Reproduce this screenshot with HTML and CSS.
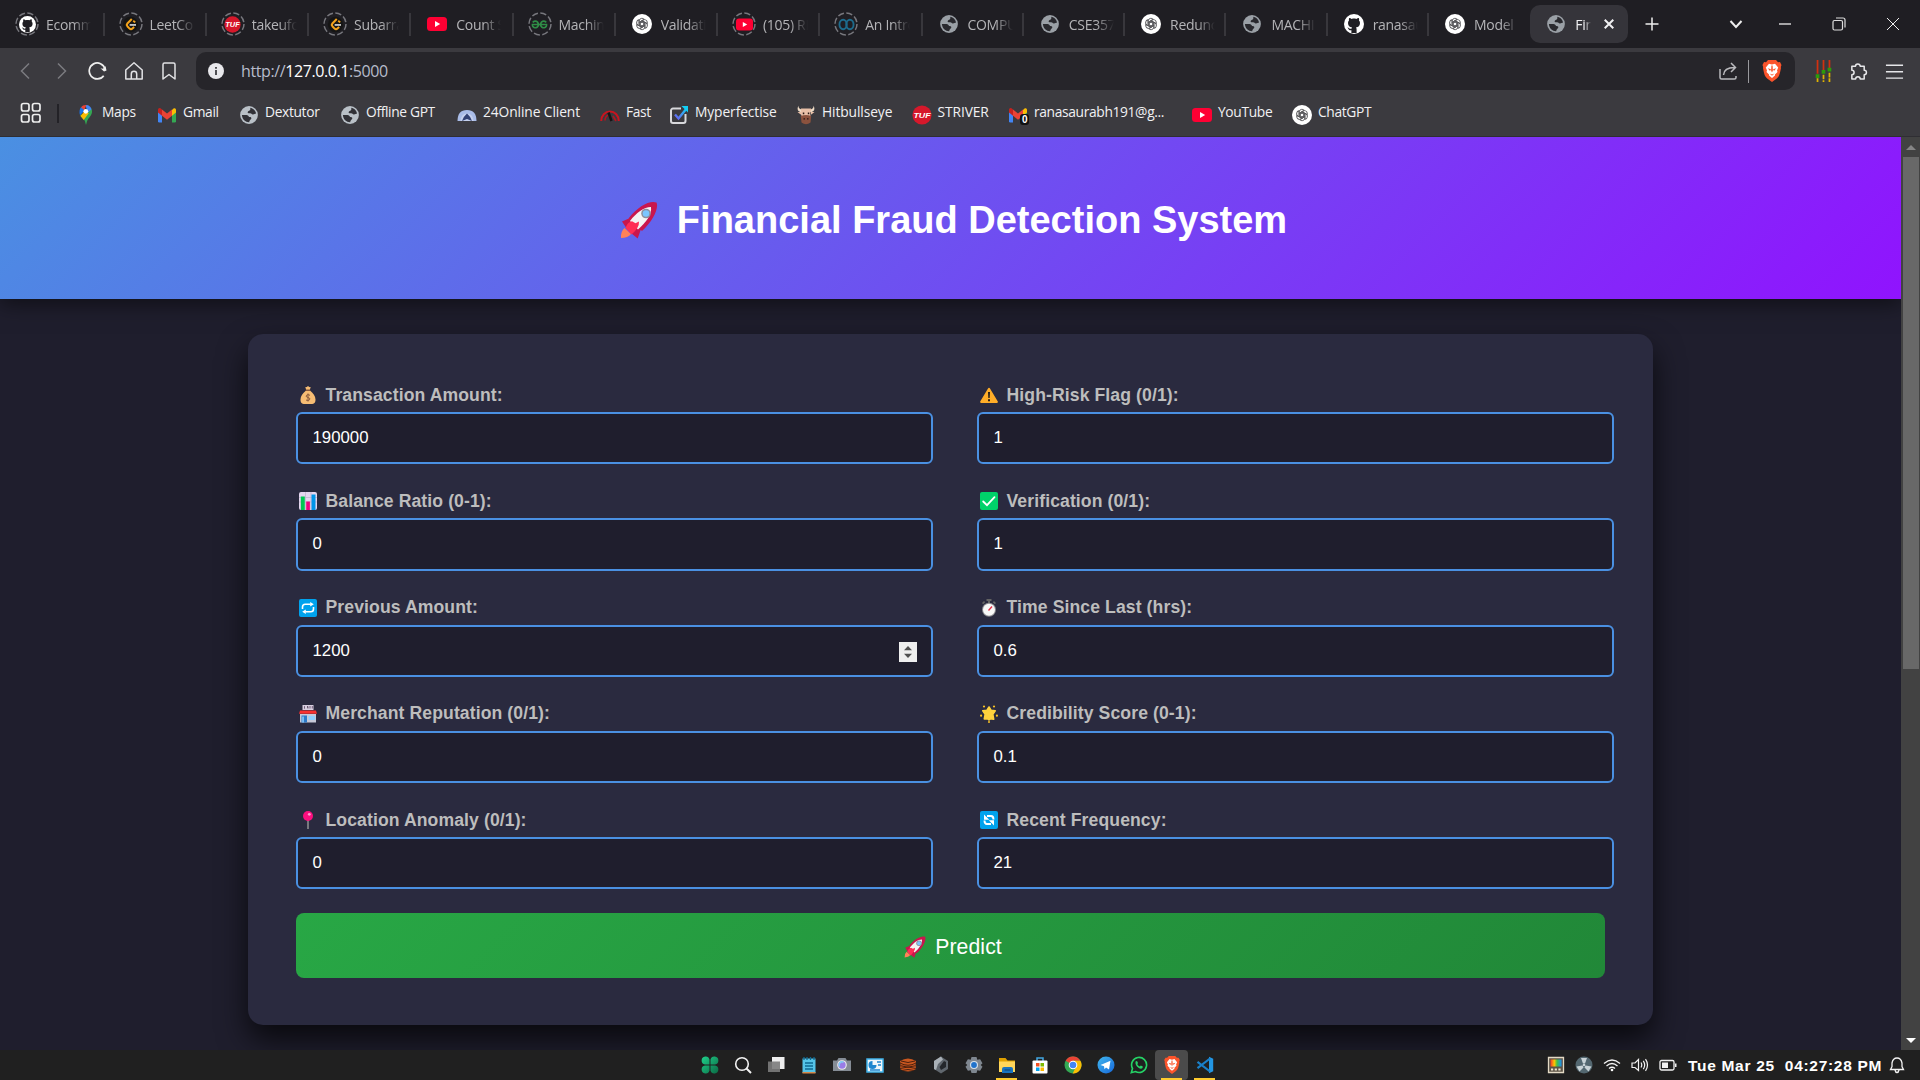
FILE: index.html
```html
<!DOCTYPE html>
<html lang="en">
<head>
<meta charset="utf-8">
<title>Financial Fraud Detection System</title>
<link rel="stylesheet" href="styles.css">
</head>
<body>
<svg class="defs" aria-hidden="true">
  <defs>
    <linearGradient id="g-clover" x1="0" y1="0" x2="1" y2="1"><stop offset="0" stop-color="#1fd08a"/><stop offset="1" stop-color="#0b6b45"/></linearGradient>
    <linearGradient id="g-tg" x1="0" y1="0" x2="1" y2="1"><stop offset="0" stop-color="#41b8ef"/><stop offset="1" stop-color="#1667d9"/></linearGradient>
    <linearGradient id="g-rain" x1="0" x2="1"><stop offset="0" stop-color="#f13a2b"/><stop offset=".35" stop-color="#ffc400"/><stop offset=".6" stop-color="#3fbf4a"/><stop offset="1" stop-color="#1e8df2"/></linearGradient>
    <linearGradient id="g-chk" x1="0" y1="1" x2="1" y2="0"><stop offset="0" stop-color="#6a5cf0"/><stop offset="1" stop-color="#12d5f5"/></linearGradient>
  </defs>
  <symbol id="ring" viewBox="0 0 24 24"><circle cx="12" cy="12" r="11" fill="none" stroke="#77777d" stroke-width="1.5" stroke-dasharray="6.2 2.44"/></symbol>
  <symbol id="github" viewBox="0 0 20 20"><circle cx="10" cy="10" r="10" fill="#fff"/><path fill="#1f1e23" d="M7.4 19v-2.800c-2 .4-2.7-.6-3.1-1.5-.2-.5-.6-.9-1-1.200 1.500-.4 1.900 1.800 4.200 1.300.1-.6.3-1 .6-1.300C5.600 13.100 4 12 4 9.100c0-1 .4-1.900 1-2.500-.2-.8-.2-1.700.1-2.700 1 0 1.900.5 2.600 1 1.500-.4 3.100-.4 4.600 0 .7-.5 1.600-1 2.600-1 .3 1 .3 1.900.1 2.700.6.6 1 1.500 1 2.500 0 2.900-1.600 4-4.100 4.400.5.5.7 1.100.7 1.900v3.600z"/></symbol>
  <symbol id="leet" viewBox="0 0 20 20"><circle cx="10" cy="10" r="9" fill="#151515"/><path d="M11.500 3.500 6.300 8.800q-1.400 1.600 0 3.200l2.600 2.800q1.700 1.500 3.400 0l2-1.800" fill="none" stroke="#f5a31b" stroke-width="2.400"/><path d="M9 10.500h7.500" stroke="#c4c4c4" stroke-width="2.200"/><path d="m13.200 5.500 2.300 2" stroke="#f5a31b" stroke-width="2.200"/></symbol>
  <symbol id="tuf" viewBox="0 0 20 20"><circle cx="10" cy="10" r="9.600" fill="#d6182b"/><text x="10" y="13" text-anchor="middle" class="tuf-text" textLength="17" lengthAdjust="spacingAndGlyphs">TUF</text></symbol>
  <symbol id="yt" viewBox="0 0 20 20"><rect y="3" width="20" height="14" rx="3.500" fill="#ff0033"/><path d="M8 7v6l5.200-3z" fill="#fff"/></symbol>
  <symbol id="gfg" viewBox="0 0 20 20" fill="none" stroke="#2f8d46" stroke-width="1.900"><path d="M2 7.500Q5 4.800 7.800 7.300q2.200 3-.3 5.700-3.500 2.200-5.500-1-.5-1-.3-2H18.300q.2 1-.3 2-2 3.200-5.500 1-2.500-2.700-.3-5.700Q15 4.800 18 7.500"/></symbol>
  <symbol id="loops" viewBox="0 0 20 20" fill="none" stroke="#1d6b8c" stroke-width="2.200"><ellipse cx="6" cy="10" rx="4.300" ry="5.600"/><ellipse cx="14" cy="10" rx="4.300" ry="5.600"/></symbol>
  <symbol id="gpt" viewBox="0 0 20 20"><circle cx="10" cy="10" r="10" fill="#fff"/><g fill="none" stroke="#555558" stroke-width=".9"><path id="petal" d="M7.200 12V6.800q.2-2.300 2.600-2.500 1.500 0 2.400 1L8.300 7.600v4.200"/><use href="#petal" transform="rotate(60 10 10)"/><use href="#petal" transform="rotate(120 10 10)"/><use href="#petal" transform="rotate(180 10 10)"/><use href="#petal" transform="rotate(240 10 10)"/><use href="#petal" transform="rotate(300 10 10)"/></g></symbol>
  <symbol id="globe" viewBox="0 0 20 20"><circle cx="10" cy="10" r="8.900" fill="#9aa0a6"/><path fill="#29292e" d="M11.300 2.800c2 .3 5 2 5.800 5.600l-3.100 1c-1.300.2-1.600-1.400-3-1.200-1.500.3-2.600 0-2.300-1.300.3-1.400 2.700-1 2.600-2.500zM2.900 10h4.600c1.400.1 2.200 1 2.500 2 2.300-.2 2.700.9 2.100 2-.6 1-1.700 1-1.900 3.200-3.700.1-7-2.600-7.300-7.200z"/></symbol>
  <symbol id="maps" viewBox="0 0 20 24"><path fill="#34a853" d="M3.500 12.500 15.800 5c3 6-3 10-4.600 13.500L10 23l-1.200-4.500C8 16.500 5 15 3.500 12.500z"/><path fill="#fbbc04" d="m4 13 5-6 4 3-5.500 7.500z"/><path fill="#4285f4" d="M9.500 1.200c3-.5 5.700 1.500 6.500 4.500l-4.200 4z"/><path fill="#ea4335" d="M4.500 3.500q2-2.500 6-2.300L7 9z"/><path fill="#1a73e8" d="M3.500 12.300C2.300 9 3 5.500 4.500 3.500L8.500 7z"/><circle cx="9.800" cy="8" r="2.600" fill="#fff"/></symbol>
  <symbol id="gmail" viewBox="0 0 20 20"><path fill="#4285f4" d="M1 5h4v12.500H2.300A1.300 1.300 0 0 1 1 16.200z"/><path fill="#34a853" d="M15 5h4v11.200a1.300 1.300 0 0 1-1.300 1.300H15z"/><path fill="#fbbc04" d="m15 5 1.500-1.500C18 2.600 19 3.500 19 5v2.500l-4 3.200z"/><path fill="#c5221f" d="M1 5c0-1.700 1.500-2.400 2.700-1.500L5 4.500v6.200L1 7.500z"/><path fill="#ea4335" d="m5 4.500 5 4 5-4v6.200l-5 4-5-4z"/></symbol>
  <symbol id="arch" viewBox="0 0 20 20"><path d="M.5 16q0-11 9.500-11t9.500 11z" fill="#a9bce8"/><path d="M3.500 16q.5-7.500 6.500-7.500t6.500 7.500z" fill="#c4d0ee"/><path d="M5 16q1-4 5-7.500 4 3.500 5 7.500l-5-2z" fill="#334275"/></symbol>
  <symbol id="gauge" viewBox="0 0 20 20" fill="none"><path d="M1.200 16a8.800 9.500 0 0 1 17.600 0" stroke="#c8141f" stroke-width="2"/><path d="M5 15.500a5.500 5.500 0 0 1 5-6M13 11l3 5" stroke="#b3141f" stroke-width="1.600"/><path d="m8.500 7.500 3 8.500" stroke="#151515" stroke-width="2.500"/></symbol>
  <symbol id="checkbox" viewBox="0 0 20 20" fill="none"><path d="M12 3.500H4A2 2 0 0 0 2 5.500V16a2 2 0 0 0 2 2h10.500a2 2 0 0 0 2-2V9" stroke="#d8d8dc" stroke-width="2"/><path d="m6 9.500 3.500 4L18 3" stroke="url(#g-chk)" stroke-width="2.400"/><path d="M12.500 1H19v6.500z" fill="#12cdf3"/></symbol>
  <symbol id="bull" viewBox="0 0 20 20"><path fill="#efdcc6" d="M2.500.5q-.5 3.500 4 4v3q-7-1-4-7zm15 0q.5 3.500-4 4v3q7-1 4-7z"/><path fill="#e9c0a8" d="M5 3.500h10l-.5 9h-9zM1.500 7 6 7v3.500zM18.500 7 14 7v3.500z"/><path fill="#8b523e" d="M4.800 11q5.200-2 10.400 0l-.7 6.500q-4.500 3.500-9 0z"/><path fill="#2a1814" d="M6.800 7.500h1.500v1.800H6.800zm5 0h1.500v1.800h-1.500zM7.500 13.200h1.500v1.200H7.500zm3.500 0h1.500v1.200H11z"/></symbol>
  <symbol id="back" viewBox="0 0 20 20"><path d="M13 2.500 5.500 10l7.500 7.500" fill="none" stroke="#7b7b80" stroke-width="1.500"/></symbol>
  <symbol id="fwd" viewBox="0 0 20 20"><path d="m6 2.500 7.500 7.500L6 17.500" fill="none" stroke="#7b7b80" stroke-width="1.500"/></symbol>
  <symbol id="reload" viewBox="0 0 20 20"><path d="M15.700 14.700A8 8 0 1 1 17 8" fill="none" stroke="#eee" stroke-width="1.700"/><path d="M12.500 7.200q3.500 1.500 5-2.200l1 4.500-2.500 1z" fill="#eee"/></symbol>
  <symbol id="home" viewBox="0 0 20 20" fill="none" stroke="#e2e2e5" stroke-width="1.500"><path d="M1.800 9 10 1.800 18.200 9v9H1.800z" stroke-linejoin="round"/><path d="M7.300 18v-5a2.700 2.700 0 0 1 5.400 0v5"/></symbol>
  <symbol id="mark" viewBox="0 0 20 20"><path d="M3 3.500Q3 2 4.500 2h9Q15 2 15 3.500V18l-6-4.500L3 18z" fill="none" stroke="#e2e2e5" stroke-width="1.500" stroke-linejoin="round"/></symbol>
  <symbol id="info" viewBox="0 0 16 16"><circle cx="8" cy="8" r="8" fill="#e8e8ec"/><path d="M7.200 7h1.600v5H7.200zM7.200 4h1.600v1.700H7.200z" fill="#29292e"/></symbol>
  <symbol id="share" viewBox="0 0 20 20" fill="none" stroke="#b9b9bd" stroke-width="1.500"><path d="M2 8v8.500A1.500 1.500 0 0 0 3.500 18h13a1.500 1.500 0 0 0 1.500-1.500V15"/><path d="M5.500 14Q6 6.500 16.500 6.500M13 2l4.500 4.500L13 11"/></symbol>
  <symbol id="brave" viewBox="0 0 20 22"><path fill="#fb542b" d="M6 0h8l2 2.200 2-.2 1.500 3-.7 2 .2 1c-1 5-1.500 8.500-4.500 10.700L10 22l-4.500-3.300C2.500 16.500 2 13 1 8l.2-1-.7-2L2 2l2 .2z"/><path fill="#fff" d="m10 4.500 3-.7 3.200 3.700-1.200 3 .5 1.500-2.500 2.500 0 1-3 2.500-3-2.500v-1L4.500 12l.5-1.500-1.200-3L7 3.800z"/><path fill="#fb542b" d="M5.800 8.300 9 9.200 8 11zm8.400 0L11 9.200l1 1.800zM7.500 13.500l2.500 1 2.500-1L10 15.800zM9.400 5.500h1.200l.3 5-.9 2-.9-2z"/></symbol>
  <symbol id="eq" viewBox="0 0 18 24"><path d="M2.500 0v15M9 0v11M15.500 0v9" stroke="#d3300f" stroke-width="1.900"/><path d="M2.500 20v4M9 16v8M15.500 14v10" stroke="#e0b400" stroke-width="1.900" stroke-dasharray="5 1"/><path d="M.5 15.500h4v4h-4zM7 11h4v4H7zM13.500 8.500h4v4h-4z" fill="#2d9b0b"/></symbol>
  <symbol id="puzzle" viewBox="0 0 20 20"><path d="M3 4.500h3.800a2.500 2.500 0 0 1 5 0h4.200v4.300a2.300 2.300 0 0 1 0 4.700v4.500h-4.200a2.400 2.400 0 0 0-4.800 0H3v-4.500a2.300 2.300 0 0 0 0-4.700z" fill="none" stroke="#e6e6e9" stroke-width="1.600" stroke-linejoin="round"/></symbol>
  <symbol id="menu" viewBox="0 0 20 20"><path d="M1 3.500h18M1 10.300h18M1 17h18" stroke="#e6e6e9" stroke-width="1.500"/></symbol>
  <symbol id="apps" viewBox="0 0 22 22" fill="none" stroke="#eee" stroke-width="1.700"><rect x="1.500" y="1.500" width="7.500" height="7.500" rx="2"/><rect x="12.500" y="1.500" width="7.500" height="7.500" rx="2"/><rect x="1.500" y="12.500" width="7.500" height="7.500" rx="2"/><rect x="12.500" y="12.500" width="7.500" height="7.500" rx="2"/></symbol>
  <symbol id="x" viewBox="0 0 14 14"><path d="m1 1 12 12M13 1 1 13" stroke="currentColor" fill="none"/></symbol>
  <symbol id="rocket" viewBox="0 0 38 38"><path fill="#ff8257" d="M1 37q-.5-6.500 3.500-10l6.500 6Q8 37 1 37z"/><path fill="#c9164d" d="M2 20.500 10 17l11 11-3.300 9.500-8-6.500-3-3.500zM36.500 1.500C39 7 33 20 22 30L8.500 17.500C18 5 30-1 36.500 1.500z"/><path fill="#f4f4f4" d="M31 6C24 6 16 12 10 20l8 8.500C26 21.500 32 13.500 31 6z"/><path fill="#ff2d55" d="M5.500 27q2-6 6.500-6.800l3.500 2 3.500-1.700q.5 6-7.500 13z"/><circle cx="26" cy="12.500" r="4.800" fill="#8d8f9c"/><circle cx="26" cy="12.500" r="3.300" fill="#7bc6ff"/></symbol>
  <symbol id="bag" viewBox="0 0 18 18"><path fill="#8a5a3c" d="M7 3h4l.7 2.500H6.300z"/><path fill="#f6bc73" d="M6.200 1.300 7.800 1 9 0l1.200 1 1.600.3L10.800 3.500H7.200zM6.500 5h5c2.500 2 5 5 5 8.500S15 18 12.500 18h-7c-2.500 0-4-1-4-4.500S4 7 6.500 5z"/><path d="M11 9.300Q9 8 7.500 9.300t1.500 2.200 1.500 2.300T7 14M9 7.500v8" fill="none" stroke="#8a5a3c"/></symbol>
  <symbol id="chart" viewBox="0 0 18 18"><rect width="18" height="18" rx="2" fill="#e4d6ef"/><path d="M0 5.500h18M0 10h18M6.500 0v18M12 0v18" stroke="#bfb0cd" stroke-width=".7"/><path fill="#00c853" d="M1.800 4.500h4V18h-4z"/><path fill="#f0047f" d="M7.200 9.500h3.700V18H7.200z"/><path fill="#0095e8" d="M12.500 2.500h4V18h-4z"/></symbol>
  <symbol id="repeat" viewBox="0 0 18 18"><rect width="18" height="18" rx="2" fill="#00a2ed"/><g fill="none" stroke="#fff" stroke-width="1.600"><path d="M3.500 10V8q0-2.700 2.700-2.700h5.500M14.500 8v2q0 2.700-2.700 2.700H6.300"/></g><path fill="#fff" d="m11.200 3 3.600 2.300-3.600 2.300zM6.800 10.400V15l-3.600-2.300z"/></symbol>
  <symbol id="shop" viewBox="0 0 18 18"><path fill="#d8cfe0" d="M3.500 0h11v5h-11z"/><path d="M5.500 1.200v2.500M8 1.500h1v2M11 1v2.500M13.300 1v2.500" stroke="#66506e" stroke-width=".9"/><path fill="#c6c9d8" d="M1 9h16v8.500H1z"/><path fill="#f8312f" d="M1 5.500h16l1 3.200H0z"/><path fill="#2c79c7" d="M2.500 10.500H8v7H2.500z"/><path fill="#8fd0ff" d="M9.500 11h6.500v4H9.500zM3.300 11.500h1.500v6H3.300z"/></symbol>
  <symbol id="pin" viewBox="0 0 18 18"><path d="M9 8v10" stroke="#9b9b9b" stroke-width="1.400"/><circle cx="9" cy="5" r="5" fill="#fa0f7f"/><circle cx="10.300" cy="3.300" r="1.400" fill="#ff9ccf"/></symbol>
  <symbol id="warn" viewBox="0 0 18 18"><path fill="#ffad28" d="M9 1.800q.6 0 1 .7l7.800 13q.5 1.200-.8 1.500H1Q-.2 16.700.2 15.500L8 2.500q.4-.7 1-.7z"/><path fill="#2b2118" d="M8 6h2l-.3 6H8.300zM8 13.200h2v2H8z"/></symbol>
  <symbol id="ok" viewBox="0 0 18 18"><rect width="18" height="18" rx="2" fill="#00d26a"/><path d="m3.200 9.500 3.800 3.700 7.500-8" fill="none" stroke="#fff" stroke-width="1.800" stroke-linecap="round"/></symbol>
  <symbol id="watch" viewBox="0 0 18 18"><path fill="#636363" d="M6.500 0h5v2H10v2H8V2H6.500zM2 4l2-2 1.200 1.200-2 2zM16 4l-2-2-1.200 1.200 2 2z"/><circle cx="9" cy="10.700" r="7" fill="#8d8d92"/><circle cx="9" cy="10.700" r="6" fill="#f8f8f8"/><path d="m8.500 11.500 3.500-4" stroke="#e62d45" stroke-width="1.300"/></symbol>
  <symbol id="glow" viewBox="0 0 18 18"><path fill="#ffd23d" stroke="#ffd23d" stroke-width="1.600" stroke-linejoin="round" d="m9 2 2 3.200 4.200.5-2.400 3.700.9 4.800-3.400-.4L9 15l-1.300-1.400-3.400.4.900-4.800-2.400-3.500L7 5.200z"/><g fill="#f9c024"><circle cx="4" cy="1.500" r="1.100"/><circle cx="14" cy="1.500" r="1.100"/><circle cx="1.100" cy="10.700" r="1.100"/><circle cx="16.900" cy="10.700" r="1.100"/><circle cx="9" cy="17" r="1"/></g></symbol>
  <symbol id="cycle" viewBox="0 0 18 18"><rect width="18" height="18" rx="2" fill="#00a2ed"/><g fill="none" stroke="#fff" stroke-width="1.900"><path d="M7 5h4q2.500 0 2.500 3.500"/><path d="M11 13H7q-2.500 0-2.500-3.500"/></g><path fill="#fff" d="M4 3.500v5.300h5.200zM14 14.500V9.200H8.800z"/></symbol>
  <symbol id="t-clover" viewBox="0 0 18 18"><g fill="url(#g-clover)"><path d="M8.500 8.500H4A4 4 0 1 1 8.500 3.500zM9.500 8.500V3.500A4 4 0 1 1 14 8.500zM8.500 9.500v5A4 4 0 1 1 4 9.500zM9.500 9.500H14a4 4 0 1 1-4.500 5z"/></g></symbol>
  <symbol id="t-search" viewBox="0 0 18 18" fill="none" stroke="#f2f2f2" stroke-width="1.600"><circle cx="8" cy="8" r="6.300"/><path d="m12.500 12.500 4.500 4.500" stroke-width="2"/></symbol>
  <symbol id="t-view" viewBox="0 0 18 18"><path fill="#eee" d="M5 1h12.500v12H5z"/><path fill="#7b7b7b" opacity=".9" d="M1 5.500h12V16H1z"/></symbol>
  <symbol id="t-note" viewBox="0 0 18 18"><path fill="#55c4e8" d="M2.500 2.500h13V17h-13z"/><path fill="#d58a4c" d="M2.500 16h13v1.500h-13z"/><path d="M4 1v3M7 1v3M10.500 1v3M14 1v3M5 7h8M5 10h8M5 13h8" stroke="#0e6a92" stroke-width="1.300"/></symbol>
  <symbol id="t-cam" viewBox="0 0 18 18"><path fill="#858c95" d="M0 4.500h4L5.500 2h7L14 4.500h4V15H0z"/><circle cx="9" cy="9" r="4.800" fill="#eee"/><circle cx="9" cy="9" r="3.700" fill="#9a7ce6"/><path d="M6.500 10.500a3 3 0 0 1 4-4.200" fill="none" stroke="#7fd0f5" stroke-width="1.500"/></symbol>
  <symbol id="t-panel" viewBox="0 0 18 18"><path fill="#f0f6fa" stroke="#3eb2ea" stroke-width="1.500" d="M1 3h16v13H1z"/><path fill="#1f86cf" d="M6.500 5v4h4a4 4 0 1 1-4-4z"/><path d="M11 6h4M12 9h3M4 14h10" stroke="#1f86cf" stroke-width="1.300"/></symbol>
  <symbol id="t-burn" viewBox="0 0 18 18"><path fill="#c9571f" d="M1 5q8-5 16 0-1 4 0 8-8 5-16 0 1-4 0-8z"/><path d="M1 7q8 4.500 16 0M1.500 9.700q7.500 3 15 0M1 12.500q8-3 16 0M2 5q7 3 14 0M3 14.500q6-2 12 0" stroke="#4a200f" stroke-width="1" fill="none"/></symbol>
  <symbol id="t-hex" viewBox="0 0 18 18"><path fill="#60676e" d="m9 .5 7 4.500v8l-7 4.500L2 13V5z"/><path fill="#a9b0b6" d="m9 .5 2 3L6 8l-2 6-2-1V5z"/><path fill="#24272b" d="m12 5 2 1v5l-5 3-1.500-3z"/></symbol>
  <symbol id="t-gear" viewBox="0 0 18 18"><path fill="#7f8790" d="M6.500 1h5l.8 2.700 2.800-.5 2.400 4L15.700 9l1.800 1.800-2.400 4-2.800-.5-.8 2.700h-5l-.8-2.700-2.800.5-2.400-4L2.300 9 .5 7.200l2.400-4 2.800.5z"/><circle cx="9" cy="9" r="4" fill="#d8e2eb"/><circle cx="9" cy="9" r="2.900" fill="#2173cc"/></symbol>
  <symbol id="t-folder" viewBox="0 0 18 18"><path fill="#e0a100" d="M1 2h6.500l2 2.500H17V9H1z"/><path fill="#ffd65a" d="M1 5.500h16V16H1z"/><path fill="#1973bf" d="M4 17v-4q0-2 2-2h7q2 0 2 2v4z"/><path d="M6.500 14h6" stroke="#0d4c86" stroke-width="1.300"/></symbol>
  <symbol id="t-store" viewBox="0 0 18 18"><path d="M6 5V2h6v3" fill="none" stroke="#42a7e1" stroke-width="1.500"/><rect x="1.500" y="4.500" width="15" height="13" rx="1" fill="#fff"/><path fill="#f25022" d="M5 7h3.500v3.500H5z"/><path fill="#7fba00" d="M9.500 7H13v3.500H9.500z"/><path fill="#00a4ef" d="M5 11.500h3.500V15H5z"/><path fill="#ffb900" d="M9.500 11.500H13V15H9.500z"/></symbol>
  <symbol id="t-chrome" viewBox="0 0 18 18"><circle cx="9" cy="9" r="8.500" fill="#34a853"/><path fill="#ea4335" d="M9 9 1.600 4.800A8.500 8.500 0 0 1 16.400 4.800H9z"/><path fill="#fbbc04" d="M9 9h3.700l-4 8.500a8.500 8.500 0 0 0 7.700-12.700H9z"/><circle cx="9" cy="9" r="4.300" fill="#fff"/><circle cx="9" cy="9" r="3.300" fill="#4285f4"/></symbol>
  <symbol id="t-tg" viewBox="0 0 18 18"><circle cx="9" cy="9" r="8.500" fill="url(#g-tg)"/><path fill="#fff" d="m3.500 9 10-4.200L12 13.500l-3-2-1.500 1.800-.5-3z"/></symbol>
  <symbol id="t-wa" viewBox="0 0 18 18"><path fill="none" stroke="#25d366" stroke-width="1.600" d="m1.300 16.700 1.200-4.200a7.500 7.500 0 1 1 3 3z"/><path fill="#25d366" d="M5.500 5.500 7 5l1 2-.7 1.200q1 1.700 2.500 2.400l1-1 2 1-.3 1.500q-1.500 1.300-4-.3-3.500-2.300-3-6.300z"/></symbol>
  <symbol id="t-code" viewBox="0 0 18 18"><path fill="#2397e4" d="m13 .8 4.200 1.900v12.600L13 17.200z"/><path fill="none" stroke="#1a80c9" stroke-width="2.200" d="M14 2.500 1.500 12.200M14 15.500 1.500 5.800"/></symbol>
  <symbol id="y-rain" viewBox="0 0 18 18"><path fill="#5b5245" stroke="#e4dac5" stroke-width="1.300" d="M1.500 1.500h15v15h-15z"/><path fill="url(#g-rain)" d="M3.500 3.500h11v7h-11z"/><path d="M4 13.500h10" stroke="#eee4cf" stroke-width="2" stroke-dasharray="2.200 1.500"/></symbol>
  <symbol id="y-fan" viewBox="0 0 18 18"><circle cx="9" cy="9" r="8.500" fill="#536770"/><g fill="#c8d2d6"><path d="M6 2h6L10 7.500H8z"/><path d="m16.500 10.500-3 5-4-4 1-2z"/><path d="m1.500 10.500 3 5 4-4-1-2z"/><circle cx="9" cy="9" r="1.300"/></g></symbol>
  <symbol id="y-wifi" viewBox="0 0 18 18" fill="none" stroke="#f2f2f2" stroke-width="1.300"><path d="M1 7.500q8-7 16 0M3.500 10q5.500-5 11 0M6 12.500q3-2.500 6 0"/><circle cx="9" cy="14" r="1.300" fill="#fff" stroke="none"/></symbol>
  <symbol id="y-vol" viewBox="0 0 18 18" fill="none" stroke="#f2f2f2" stroke-width="1.200"><path d="M1 7h3l3.500-3.500v11L4 11.500H1zM10 6.500q1.500 2.500 0 5M12.300 4.800q2.800 4.200 0 8.400M14.500 3.200q4 5.800 0 11.600"/></symbol>
  <symbol id="y-bat" viewBox="0 0 18 18"><rect x="1" y="4.500" width="14" height="9.500" rx="1.500" fill="none" stroke="#f2f2f2" stroke-width="1.300"/><path fill="#f2f2f2" d="M3 6.500h6V12H3zM16 7.500h1.500v3.500H16z"/></symbol>
  <symbol id="y-bell" viewBox="0 0 18 18" fill="none" stroke="#f2f2f2" stroke-width="1.300"><path d="M2.500 13.500h13l-1.500-3V7Q13 2 9 2T4 7v3.500zM7 14q.5 2.500 2 2.500t2-2.500"/></symbol>
</svg>

<div class="screen">
  <div class="tabs">
    <div class="tab"><span class="fav ringed"><svg class="ring"><use href="#ring"/></svg><svg><use href="#github"/></svg></span><span class="tab-title">Ecomm</span></div>
    <div class="tab"><span class="fav ringed"><svg class="ring"><use href="#ring"/></svg><svg><use href="#leet"/></svg></span><span class="tab-title">LeetCo</span></div>
    <div class="tab"><span class="fav ringed"><svg class="ring"><use href="#ring"/></svg><svg><use href="#tuf"/></svg></span><span class="tab-title">takeufo</span></div>
    <div class="tab"><span class="fav ringed"><svg class="ring"><use href="#ring"/></svg><svg><use href="#leet"/></svg></span><span class="tab-title">Subarra</span></div>
    <div class="tab"><span class="fav"><svg><use href="#yt"/></svg></span><span class="tab-title">Count S</span></div>
    <div class="tab"><span class="fav ringed"><svg class="ring"><use href="#ring"/></svg><svg><use href="#gfg"/></svg></span><span class="tab-title">Machin</span></div>
    <div class="tab"><span class="fav"><svg><use href="#gpt"/></svg></span><span class="tab-title">Validati</span></div>
    <div class="tab"><span class="fav ringed"><svg class="ring"><use href="#ring"/></svg><svg><use href="#yt"/></svg></span><span class="tab-title">(105) RE</span></div>
    <div class="tab"><span class="fav ringed"><svg class="ring"><use href="#ring"/></svg><svg><use href="#loops"/></svg></span><span class="tab-title">An Intro</span></div>
    <div class="tab"><span class="fav"><svg><use href="#globe"/></svg></span><span class="tab-title">COMPU</span></div>
    <div class="tab"><span class="fav"><svg><use href="#globe"/></svg></span><span class="tab-title">CSE357</span></div>
    <div class="tab"><span class="fav"><svg><use href="#gpt"/></svg></span><span class="tab-title">Redunc</span></div>
    <div class="tab"><span class="fav"><svg><use href="#globe"/></svg></span><span class="tab-title">MACHI</span></div>
    <div class="tab"><span class="fav"><svg><use href="#github"/></svg></span><span class="tab-title">ranasau</span></div>
    <div class="tab"><span class="fav"><svg><use href="#gpt"/></svg></span><span class="tab-title">Model</span></div>
    <div class="tab active"><span class="fav"><svg><use href="#globe"/></svg></span><span class="tab-title">Fin</span><svg class="close"><use href="#x"/></svg></div>
    <svg class="new-tab" viewBox="0 0 14 14"><path d="M7 .5v13M.5 7h13" stroke="#eee" stroke-width="1.500"/></svg>
    <div class="win-controls">
      <svg viewBox="0 0 14 14"><path d="m1.500 4 5.500 6 5.500-6" fill="none" stroke="#eee" stroke-width="2"/></svg>
      <svg viewBox="0 0 14 14"><path d="M1 7h12" stroke="#eee" stroke-width="1.300"/></svg>
      <svg viewBox="0 0 14 14" fill="none" stroke="#ddd" stroke-width="1.200"><rect x="1" y="3.500" width="9.500" height="9.500" rx="1.500"/><path d="M4 1h7q2 0 2 2v7.500"/></svg>
      <svg><use href="#x"/></svg>
    </div>
  </div>

  <div class="toolbar">
    <div class="nav"><svg><use href="#back"/></svg><svg><use href="#fwd"/></svg><svg><use href="#reload"/></svg><svg><use href="#home"/></svg><svg><use href="#mark"/></svg></div>
    <div class="address">
      <svg class="info"><use href="#info"/></svg>
      <span class="url">http://<b>127.0.0.1</b>:5000</span>
      <svg class="share"><use href="#share"/></svg><span class="divider"></span><svg class="shield"><use href="#brave"/></svg>
    </div>
    <div class="tools"><svg class="eq"><use href="#eq"/></svg><svg><use href="#puzzle"/></svg><svg><use href="#menu"/></svg></div>
  </div>

  <div class="bookmarks">
    <svg class="apps"><use href="#apps"/></svg>
    <span class="bm-sep"></span>
    <div class="bm"><svg class="tall"><use href="#maps"/></svg>Maps</div>
    <div class="bm"><svg><use href="#gmail"/></svg>Gmail</div>
    <div class="bm bright"><svg><use href="#globe"/></svg>Dextutor</div>
    <div class="bm bright"><svg><use href="#globe"/></svg>Offline GPT</div>
    <div class="bm wide"><svg><use href="#arch"/></svg>24Online Client</div>
    <div class="bm"><svg><use href="#gauge"/></svg>Fast</div>
    <div class="bm wide"><svg><use href="#checkbox"/></svg>Myperfectise</div>
    <div class="bm wide"><svg><use href="#bull"/></svg>Hitbullseye</div>
    <div class="bm wide"><svg><use href="#tuf"/></svg>STRIVER</div>
    <div class="bm mail"><svg><use href="#gmail"/></svg><span class="count">0</span>ranasaurabh191@g...</div>
    <div class="bm"><svg><use href="#yt"/></svg>YouTube</div>
    <div class="bm"><svg><use href="#gpt"/></svg>ChatGPT</div>
  </div>

  <div class="viewport">
    <main class="page">
      <header class="hero"><svg><use href="#rocket"/></svg><h1>Financial Fraud Detection System</h1></header>
      <section class="card">
        <div class="fields">
          <div class="field"><label><svg><use href="#bag"/></svg>Transaction Amount:</label><div class="input">190000</div></div>
          <div class="field"><label><svg><use href="#warn"/></svg>High-Risk Flag (0/1):</label><div class="input">1</div></div>
          <div class="field"><label><svg><use href="#chart"/></svg>Balance Ratio (0-1):</label><div class="input">0</div></div>
          <div class="field"><label><svg><use href="#ok"/></svg>Verification (0/1):</label><div class="input">1</div></div>
          <div class="field"><label><svg><use href="#repeat"/></svg>Previous Amount:</label><div class="input">1200<svg class="spin" viewBox="0 0 18 20"><path fill="#efefef" d="M0 0h18v20H0z"/><path fill="#505050" d="m9 4 4 4.300H5zM9 16l4-4.300H5z"/></svg></div></div>
          <div class="field"><label><svg><use href="#watch"/></svg>Time Since Last (hrs):</label><div class="input">0.6</div></div>
          <div class="field"><label><svg><use href="#shop"/></svg>Merchant Reputation (0/1):</label><div class="input">0</div></div>
          <div class="field"><label><svg><use href="#glow"/></svg>Credibility Score (0-1):</label><div class="input">0.1</div></div>
          <div class="field"><label><svg><use href="#pin"/></svg>Location Anomaly (0/1):</label><div class="input">0</div></div>
          <div class="field"><label><svg><use href="#cycle"/></svg>Recent Frequency:</label><div class="input">21</div></div>
        </div>
        <button class="predict"><svg><use href="#rocket"/></svg>Predict</button>
      </section>
    </main>
    <div class="scrollbar">
      <svg viewBox="0 0 10 5"><path d="M0 5 5 0l5 5z" fill="#858585"/></svg>
      <span class="thumb"></span>
      <svg class="down" viewBox="0 0 10 5"><path d="m0 0 5 5 5-5z" fill="#fff"/></svg>
    </div>
  </div>

  <div class="taskbar">
    <div class="dock">
      <span><svg><use href="#t-clover"/></svg></span>
      <span><svg><use href="#t-search"/></svg></span>
      <span><svg><use href="#t-view"/></svg></span>
      <span><svg><use href="#t-note"/></svg></span>
      <span><svg><use href="#t-cam"/></svg></span>
      <span><svg><use href="#t-panel"/></svg></span>
      <span><svg><use href="#t-burn"/></svg></span>
      <span><svg><use href="#t-hex"/></svg></span>
      <span><svg><use href="#t-gear"/></svg></span>
      <span class="open"><svg><use href="#t-folder"/></svg></span>
      <span><svg><use href="#t-store"/></svg></span>
      <span><svg><use href="#t-chrome"/></svg></span>
      <span><svg><use href="#t-tg"/></svg></span>
      <span><svg><use href="#t-wa"/></svg></span>
      <span class="open current"><svg><use href="#brave"/></svg></span>
      <span class="open"><svg><use href="#t-code"/></svg></span>
    </div>
    <div class="tray">
      <svg><use href="#y-rain"/></svg><svg><use href="#y-fan"/></svg><svg><use href="#y-wifi"/></svg><svg><use href="#y-vol"/></svg><svg><use href="#y-bat"/></svg>
      <span class="clock">Tue Mar 25&nbsp; 04:27:28 PM</span>
      <svg class="bell"><use href="#y-bell"/></svg>
    </div>
  </div>
</div>
</body>
</html>
```

FILE: styles.css
```css
* { box-sizing: border-box; }
body { margin: 0; overflow: hidden; background: #1e1e2d; }
svg { display: block; flex: none; }
.defs { position: absolute; width: 0; height: 0; }
.tuf-text { font: italic bold 8px "Liberation Sans", sans-serif; fill: #fff; }

.screen {
  width: 1920px;
  height: 1080px;
  display: flex;
  flex-direction: column;
  font-family: "Open Sans", "Noto Sans", sans-serif;
}

/* Tab strip */
.tabs {
  height: 48px;
  flex: none;
  display: grid;
  grid-template-columns: 104.500px repeat(8, 102.250px) repeat(6, 101.300px) 98px 50px 1fr;
  align-items: center;
  background: #1f1e23;
}
.tab {
  height: 38px;
  display: flex;
  align-items: center;
  padding-left: 16px;
  gap: 9px;
  color: #b4b4b7;
  font-size: 14px;
}
.tab:first-child { padding-left: 17px; }
.tab:nth-child(-n+14) { background: linear-gradient(#38373c, #38373c) right center / 2px 23px no-repeat; }
.fav { width: 20px; height: 20px; flex: none; display: grid; grid-template: 20px / 20px; place-items: center; }
.fav svg { width: 20px; height: 20px; grid-area: 1 / 1; }
.fav.ringed svg { width: 17px; height: 17px; }
.fav.ringed .ring { width: 24px; height: 24px; margin: -2px; }
.tab-title {
  width: 45px;
  overflow: hidden;
  white-space: nowrap;
  letter-spacing: -0.3px;
  -webkit-mask-image: linear-gradient(90deg, #000 60%, transparent);
  mask-image: linear-gradient(90deg, #000 60%, transparent);
}
.tab.active {
  background: #35343a;
  border-radius: 10px;
  color: #f0f0f2;
}
.tab.active .tab-title { width: 16px; }
.close { width: 10px; height: 10px; margin-left: 4px; stroke-width: 2.800; }
.new-tab { width: 14px; height: 14px; margin-left: 17px; }
.win-controls {
  display: flex;
  justify-content: flex-end;
  align-items: center;
  gap: 39.500px;
  padding-right: 20px;
  color: #eee;
}
.win-controls svg { width: 14px; height: 14px; }
.win-controls svg:nth-child(3) { margin-right: 1px; }
.win-controls svg:first-child { margin-right: -4.500px; }

/* Address row */
.toolbar {
  height: 46px;
  flex: none;
  display: flex;
  background: #3b3a3f;
}
.nav { width: 196px; display: flex; padding-left: 16px; gap: 16px; align-items: center; }
.nav svg { width: 20px; height: 20px; }
.address {
  width: 1599px;
  height: 38px;
  margin-top: 4px;
  display: flex;
  align-items: center;
  background: #26252a;
  border-radius: 10px;
  padding: 0 13px 0 12px;
}
.info { width: 16px; height: 16px; }
.url { margin-left: 17px; flex: 1; font-size: 16px; letter-spacing: -0.4px; color: #b7bccb; line-height: 38px; }
.url b { font-weight: 400; color: #fff; }
.share { width: 20px; height: 20px; }
.divider { width: 1px; height: 23px; background: #9a9a9e; margin: 0 13px 0 10px; }
.shield { width: 20px; height: 22px; }
.tools { display: flex; align-items: center; gap: 17px; padding-left: 20px; }
.tools svg { width: 19px; height: 19px; }
.tools .eq { width: 17px; height: 22px; }

/* Bookmarks */
.bookmarks {
  height: 43px;
  flex: none;
  display: grid;
  grid-template-columns: 37px 19px 81px 82px 101px 117px 143px 69px 127px 115.500px 96.500px 184px 100px 100px;
  align-items: center;
  padding: 0 0 4px 20px;
  background: #3b3a3f;
  border-bottom: 1px solid #2f2e33;
}
.apps { width: 22px; height: 22px; }
.bm-sep { width: 2px; height: 19px; background: #232227; }
.bm { display: flex; align-items: center; gap: 6px; position: relative; white-space: nowrap; font-size: 13.800px; letter-spacing: -0.35px; color: #f1f1f3; line-height: 20px; padding-bottom: 2px; }
.bm.wide { letter-spacing: -0.1px; }
.bm svg { width: 20px; height: 20px; position: relative; top: 3px; }
.bm svg.tall { height: 22px; }
.bm.bright svg { filter: brightness(1.2); }
.count {
  position: absolute;
  left: 12px;
  top: 12px;
  width: 9px;
  height: 11px;
  border-radius: 3px;
  background: #111;
  color: #fff;
  font: bold 10px/11px "Liberation Sans", sans-serif;
  text-align: center;
}

/* Page */
.viewport { height: 913px; flex: none; display: flex; overflow: hidden; }
.page { width: 1901px; background: #1f1e2d; overflow: hidden; }
.hero {
  height: 162px;
  display: flex;
  justify-content: center;
  align-items: center;
  gap: 19px;
  padding: 4px 0 0 6px;
  color: #fff;
  background: linear-gradient(135deg, #4a90e2, #9013fe);
  box-shadow: 0 5px 20px rgba(0, 0, 0, .5);
}
.hero svg { width: 38px; height: 38px; }
.hero h1 { margin: 0; font: bold 38px/48px "Liberation Sans", Arial, sans-serif; white-space: nowrap; }
.card {
  width: 1405px;
  height: 691px;
  margin: 35px auto 0;
  padding: 48px 39px 0 48px;
  background: #2a2a3f;
  border-radius: 15px;
  box-shadow: 0 15px 30px rgba(0, 0, 0, .7);
  font-family: "Liberation Sans", Arial, sans-serif;
}
.fields { display: grid; grid-template-columns: 637px 637px; column-gap: 44px; row-gap: 24px; }
.field label { height: 30px; display: flex; align-items: center; gap: 8.500px; padding: 0 0 4px 3px; color: #bdbdbd; font-weight: 700; font-size: 17.600px; letter-spacing: .1px; white-space: nowrap; }
.field label svg { width: 18px; height: 18px; }
.input {
  height: 52.250px;
  display: flex;
  align-items: center;
  justify-content: space-between;
  padding: 0 14px 0 14.500px;
  border: 2px solid #4a90e2;
  border-radius: 6px;
  background: #1f1e2d;
  color: #fff;
  font-size: 16.800px;
}
.spin { width: 18px; height: 20px; margin-top: 2px; }
.predict {
  width: 1309px;
  height: 65px;
  margin-top: 24px;
  display: flex;
  align-items: center;
  justify-content: center;
  gap: 9px;
  border: 0;
  padding: 2px 0 0 5px;
  border-radius: 8px;
  background: linear-gradient(135deg, #28a745, #218838);
  color: #fff;
  font: 21.200px "Liberation Sans", Arial, sans-serif;
  letter-spacing: .1px;
}
.predict svg { width: 22px; height: 22px; }

.scrollbar { width: 19px; display: flex; flex-direction: column; align-items: center; background: #424242; padding: 8px 0 7px 1px; }
.scrollbar svg { width: 10px; height: 5px; }
.thumb { width: 16px; height: 512px; margin-top: 7px; background: #686868; }
.down { margin-top: auto; }

/* Taskbar */
.taskbar { height: 30px; flex: none; display: flex; justify-content: space-between; background: #202020; }
.dock { display: flex; margin-left: 693px; }
.dock span { width: 33px; height: 30px; display: grid; place-items: center; }
.dock svg { width: 18px; height: 18px; }
.dock .open { background: linear-gradient(#ffcb2e, #ffcb2e) center bottom / 21px 2px no-repeat; }
.dock .current { background-color: #4b4b4b; border-radius: 4px; }
.tray { display: flex; align-items: center; gap: 10px; padding-right: 14px; }
.tray svg { width: 18px; height: 18px; }
.clock { width: 194px; margin: 0 -4px 0 1px; padding-top: 1px; color: #fff; font: bold 15.500px/29px "Liberation Sans", Arial, sans-serif; letter-spacing: .7px; white-space: nowrap; }
```
